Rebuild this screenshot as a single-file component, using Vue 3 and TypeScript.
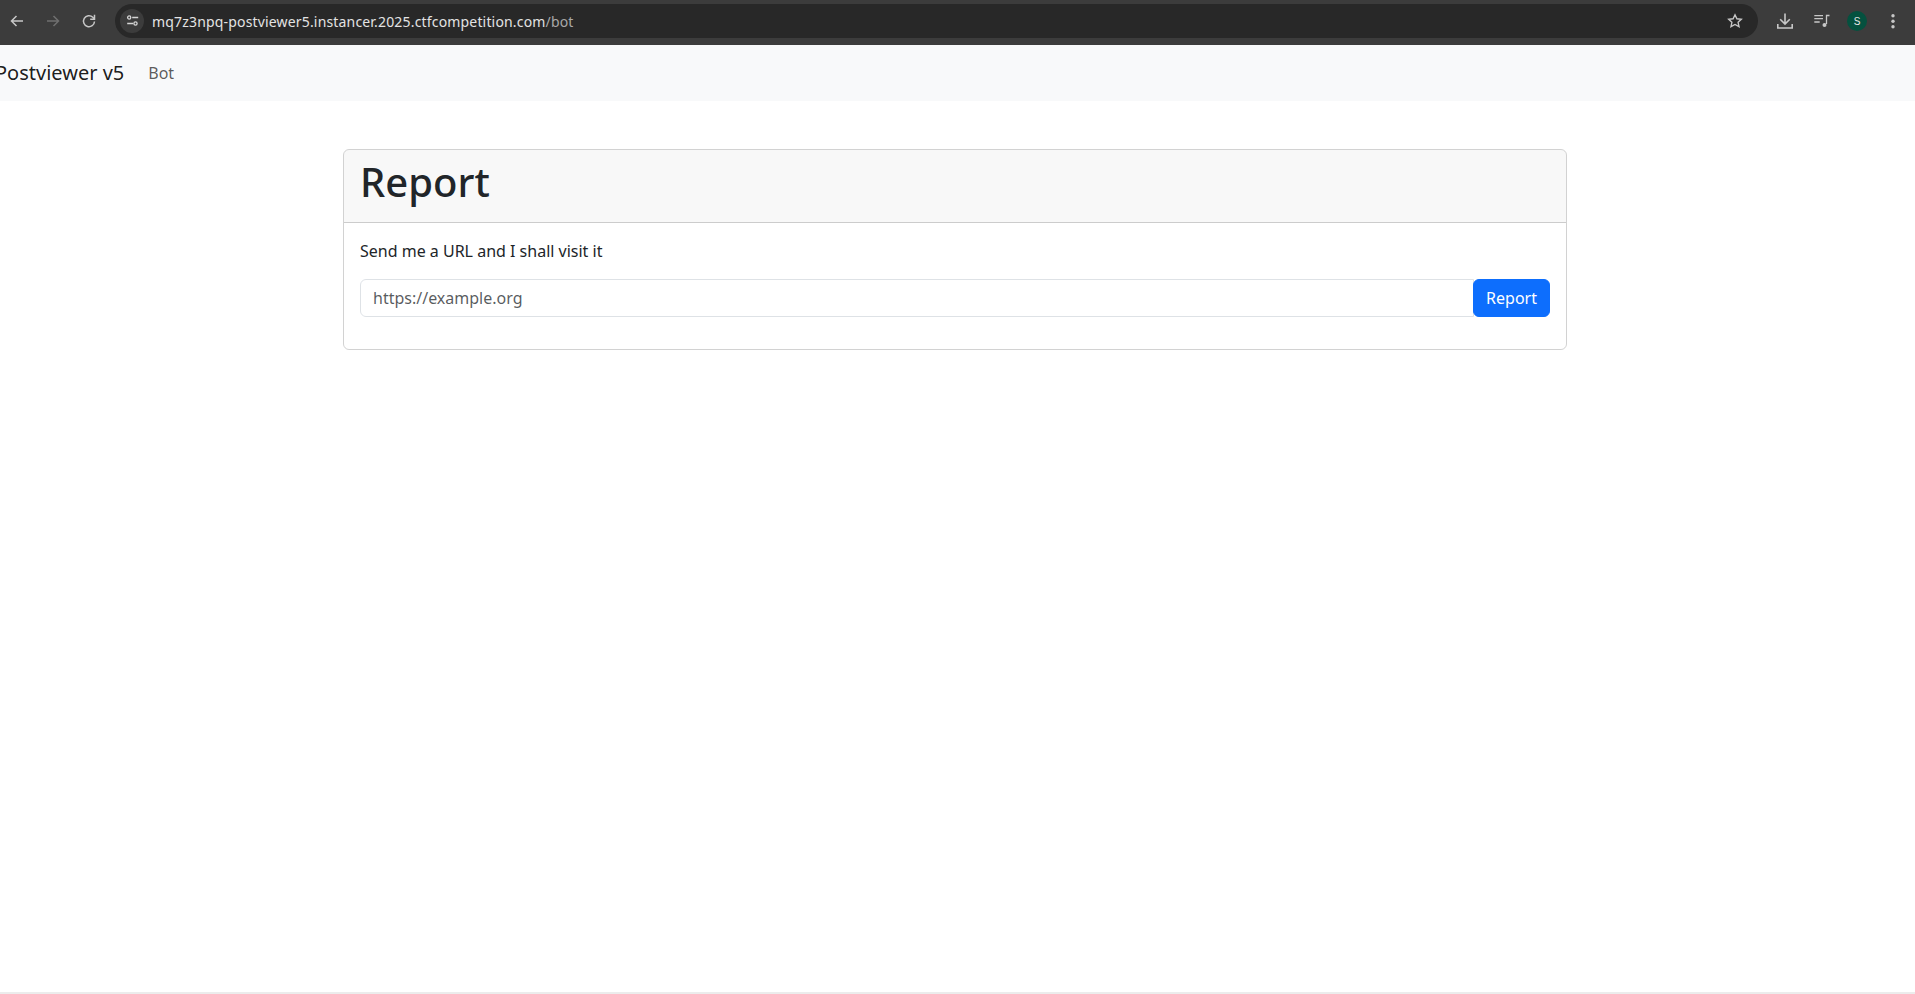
<script setup lang="ts">
import { ref } from "vue";

const url = ref("");
</script>

<template>
  <div class="browser">
    <header class="toolbar">
      <div class="nav-btns">
        <svg class="ico" viewBox="0 0 16 16" fill="none" stroke="#c7c7c7" stroke-width="1.5">
          <path d="M14 8H3M7.5 3 2.5 8l5 5" />
        </svg>
        <svg class="ico" viewBox="0 0 16 16" fill="none" stroke="#6f6f6f" stroke-width="1.5">
          <path d="M2 8h11M8.500 3l5 5-5 5" />
        </svg>
        <svg class="ico" viewBox="0 0 16 16" fill="none" stroke="#c7c7c7" stroke-width="1.5">
          <path d="M13.500 8.500A5.500 5.500 0 1 1 11.800 4.200L13.500 6" />
          <path d="M13.500 1.800v4.400H9.200" />
        </svg>
      </div>
      <div class="omnibox">
        <span class="site-info">
          <svg viewBox="0 0 16 16" width="16" height="16" fill="none" stroke="#d5d5d5" stroke-width="1.3">
            <circle cx="5.200" cy="4.500" r="1.600" />
            <path d="M8.200 4.500h6M3.200 10.500h6" />
            <circle cx="11.500" cy="10.500" r="1.600" />
          </svg>
        </span>
        <span class="address">mq7z3npq-postviewer5.instancer.2025.ctfcompetition.com<span class="path">/bot</span></span>
        <svg class="star" viewBox="0 0 16 16" fill="none" stroke="#c7c7c7" stroke-width="1.4">
          <path d="M8 1.800l1.900 4 4.400.5-3.200 3 .9 4.400L8 11.500l-4 2.200.9-4.400-3.200-3 4.400-.5z" />
        </svg>
      </div>
      <div class="actions">
        <svg class="ico" viewBox="0 0 16 16" fill="none" stroke="#c7c7c7" stroke-width="1.600">
          <path d="M8 .5v10M3.200 6.200 8 11l4.800-4.800M.8 11v4h14.400v-4" />
        </svg>
        <svg class="ico playlist" viewBox="0 0 16 16" fill="none" stroke="#c7c7c7" stroke-width="1.300">
          <path d="M.3 2.700H9M.3 5.700H9M.3 9h5.400" />
          <path d="M12.500 11V2.500h3" />
          <circle cx="10.500" cy="12" r="2" fill="#c7c7c7" stroke="none" />
        </svg>
        <span class="avatar">S</span>
        <svg class="ico dots" viewBox="0 0 16 16" fill="#c7c7c7">
          <circle cx="8" cy="2.700" r="1.700" />
          <circle cx="8" cy="8.300" r="1.700" />
          <circle cx="8" cy="13.700" r="1.700" />
        </svg>
      </div>
    </header>

    <nav class="navbar">
      <a class="brand">Postviewer v5</a>
      <a class="nav-link">Bot</a>
    </nav>

    <main class="container">
      <section class="card">
        <div class="card-header">
          <h1>Report</h1>
        </div>
        <div class="card-body">
          <p>Send me a URL and I shall visit it</p>
          <form class="input-group" @submit.prevent>
            <input v-model="url" type="text" placeholder="https://example.org" />
            <button type="submit">Report</button>
          </form>
        </div>
      </section>
    </main>

    <div class="bottom-edge"></div>
  </div>
</template>

<style scoped>
.browser {
  display: flex;
  flex-direction: column;
  height: 994px;
  overflow: hidden;
  font-family: "Noto Sans", sans-serif;
  font-size: 16px;
  line-height: 1.5;
  color: #212529;
  background: #fff;
}
.toolbar {
  display: flex;
  align-items: center;
  height: 45px;
  padding-bottom: 3px;
  box-sizing: border-box;
  flex: none;
  background: #3c3c3c;
}
.nav-btns {
  display: flex;
  align-items: center;
  gap: 20px;
  padding-left: 9px;
  width: 115px;
  box-sizing: border-box;
}
.ico {
  width: 16px;
  height: 16px;
  flex: none;
}
.omnibox {
  display: flex;
  align-items: center;
  width: 1643px;
  height: 34px;
  border-radius: 17px;
  background: #282828;
}
.site-info {
  display: flex;
  align-items: center;
  justify-content: center;
  width: 24px;
  height: 24px;
  margin-left: 5px;
  border-radius: 50%;
  background: #3c3c3c;
}
.address {
  flex: 1;
  margin-left: 8px;
  font-size: 14px;
  letter-spacing: 0.17px;
  color: #e3e3e3;
  white-space: nowrap;
}
.path {
  color: #a8a8a8;
}
.star {
  width: 16px;
  height: 16px;
  margin-right: 15px;
}
.actions {
  display: flex;
  align-items: center;
  padding-left: 19px;
}
.playlist {
  margin-left: 21px;
}
.avatar {
  display: flex;
  align-items: center;
  justify-content: center;
  width: 20px;
  height: 20px;
  margin-left: 17px;
  border-radius: 50%;
  background: #04513f;
  color: #e6e6e6;
  font-size: 10px;
  font-family: "Liberation Sans", sans-serif;
}
.dots {
  margin-left: 18px;
}
.navbar {
  display: flex;
  align-items: center;
  height: 56px;
  flex: none;
  background: #f8f9fa;
}
.brand {
  margin-left: -5px;
  font-size: 20px;
  color: rgba(0, 0, 0, 0.9);
}
.nav-link {
  margin-left: 24px;
  color: rgba(0, 0, 0, 0.65);
}
.container {
  flex: 1;
  padding: 48px 0 0 343px;
}
.card {
  width: 1224px;
  box-sizing: border-box;
  border: 1px solid rgba(0, 0, 0, 0.176);
  border-radius: 6px;
  overflow: hidden;
}
.card-header {
  padding: 8px 16px;
  background: rgba(33, 37, 41, 0.03);
  border-bottom: 1px solid rgba(0, 0, 0, 0.176);
}
h1 {
  margin: 0 0 8px;
  font-size: 40px;
  font-weight: 500;
  line-height: 1.2;
}
.card-body {
  padding: 16px;
}
p {
  margin: 0 0 16px;
}
.input-group {
  display: flex;
  margin-bottom: 16px;
}
input {
  flex: 1;
  min-width: 0;
  padding: 6px 12px;
  font: inherit;
  color: #212529;
  border: 1px solid #dee2e6;
  border-radius: 6px 0 0 6px;
  outline: none;
}
input::placeholder {
  color: rgba(33, 37, 41, 0.75);
}
button {
  margin-left: -1px;
  padding: 6px 12px;
  font: inherit;
  color: #fff;
  background: #0d6efd;
  border: 1px solid #0d6efd;
  border-radius: 6px;
}
.bottom-edge {
  height: 2px;
  flex: none;
  background: #ececec;
}
</style>
